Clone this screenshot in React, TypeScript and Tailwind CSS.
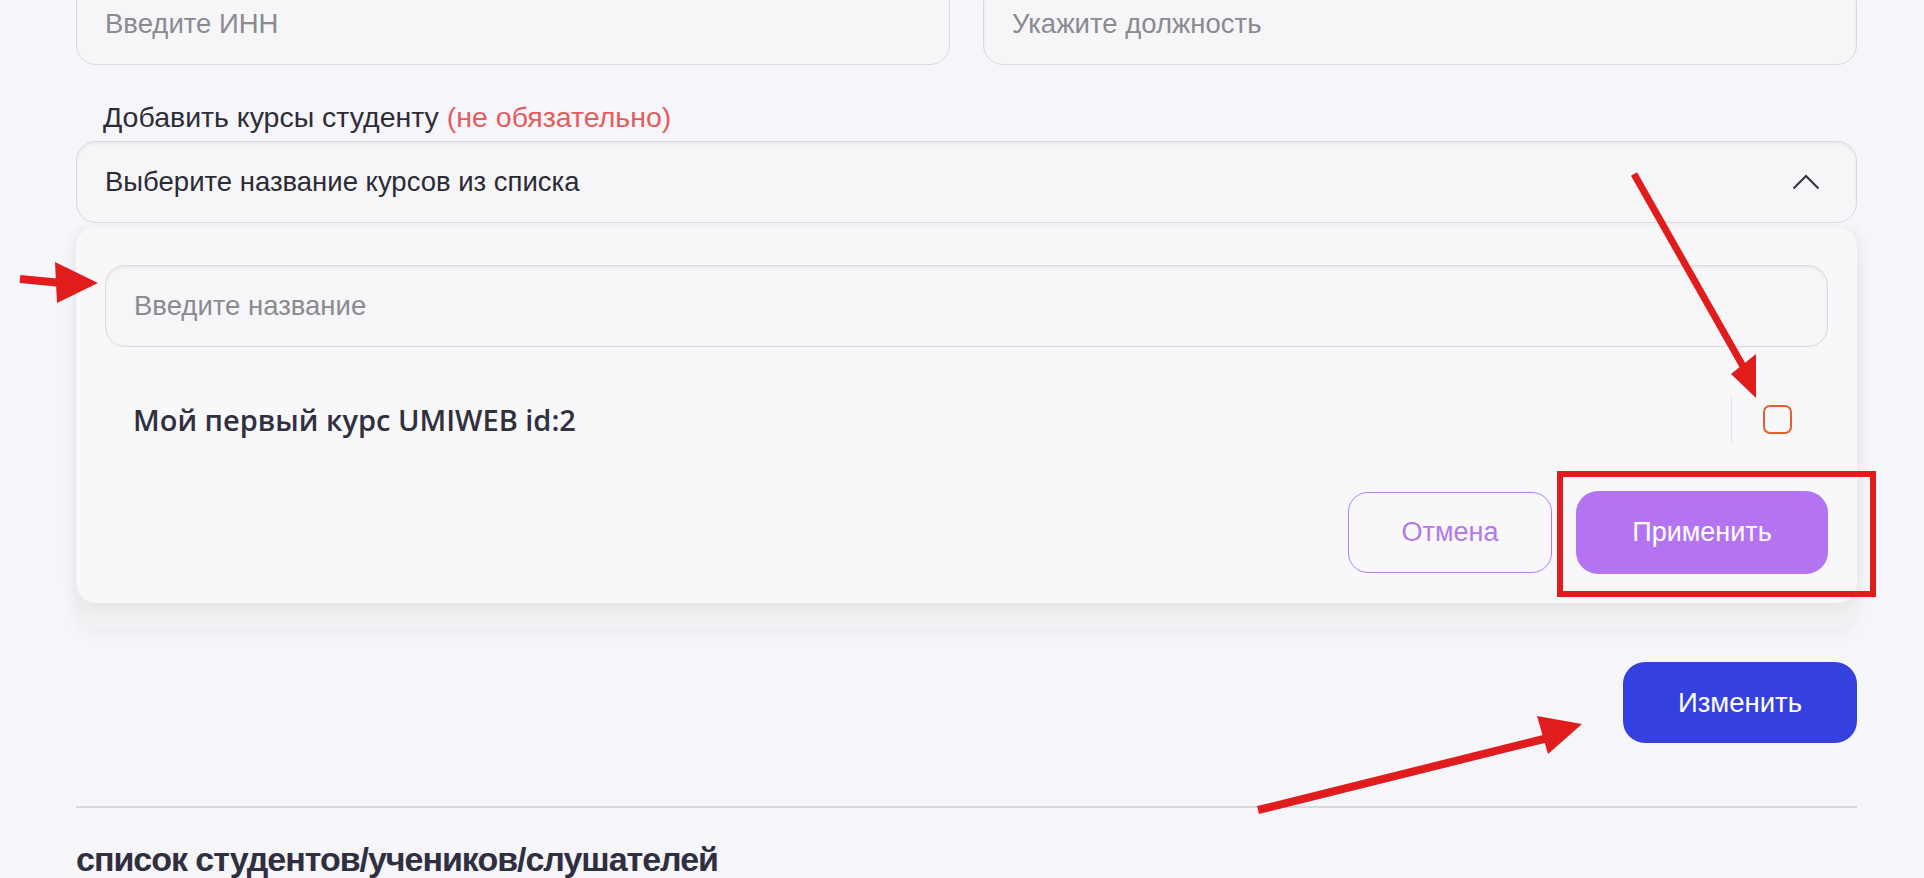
import React from 'react';

const sans = { fontFamily: '"Liberation Sans", Arial, sans-serif' };

const Annotations: React.FC = () => (
  <svg
    className="pointer-events-none absolute left-0 top-0"
    width={1924}
    height={878}
    viewBox="0 0 1924 878"
  >
    {/* left arrow to search field */}
    <line x1={20} y1={279} x2={62} y2={283} stroke="#e01c1c" strokeWidth={8} />
    <polygon points="55,262 98,283 57,303" fill="#e01c1c" />
    {/* diagonal arrow to checkbox */}
    <line x1={1634} y1={174} x2={1744} y2={368} stroke="#e01c1c" strokeWidth={7} />
    <polygon points="1731,374 1756,354 1756,398" fill="#e01c1c" />
    {/* arrow to save button */}
    <line x1={1258} y1={810} x2={1548} y2={738} stroke="#e01c1c" strokeWidth={8} />
    <polygon points="1537,716 1582,724 1548,754" fill="#e01c1c" />
    {/* frame round apply button */}
    <rect x={1560} y={474} width={313} height={120} fill="none" stroke="#e01c1c" strokeWidth={6} />
  </svg>
);

const Field: React.FC<{ placeholder: string }> = ({ placeholder }) => (
  <div className="h-[82px] rounded-[20px] border-[1.5px] border-[#d9d9de] bg-[#f6f6f8] px-[28px] flex items-center shadow-[inset_0_2px_3px_rgba(0,0,0,0.05)]">
    <span className="text-[27.5px] text-[#8a8a90]" style={sans}>{placeholder}</span>
  </div>
);

export default function App() {
  return (
    <div className="relative h-[878px] w-[1924px] overflow-hidden bg-[#f5f5fa]">
      <div className="mt-[-17px] pl-[76px] pr-[67px]">
        <div className="grid grid-cols-2 gap-[33px]">
          <Field placeholder="Введите ИНН" />
          <Field placeholder="Укажите должность" />
        </div>

        <div className="mt-[37px] pl-[27px] text-[28.5px] leading-[30px] text-[#2d2d38]" style={sans}>
          Добавить курсы студенту <span className="text-[#e55c5c]">(не обязательно)</span>
        </div>

        <div className="mt-[9px] h-[82px] rounded-[20px] border-[1.5px] border-[#d9d9de] bg-[#f6f6f8] pl-[28px] pr-[36px] flex items-center justify-between shadow-[inset_0_2px_3px_rgba(0,0,0,0.05)]">
          <span className="text-[27.5px] text-[#2b2b35]" style={sans}>
            Выберите название курсов из списка
          </span>
          <svg width={28} height={16} viewBox="0 0 28 16" fill="none">
            <path d="M1.5 14.5L14 2L26.5 14.5" stroke="#33333d" strokeWidth={2} />
          </svg>
        </div>

        {/* dropdown panel */}
        <div className="mt-[4px] rounded-b-[20px] bg-[#f2f2f5] pb-[25px] shadow-[0_6px_16px_rgba(0,0,0,0.04)]">
          <div className="rounded-[20px] bg-[#f8f8fa] px-[29px] pt-[38px] pb-[29px] shadow-[0_6px_18px_rgba(0,0,0,0.06)]">
            <Field placeholder="Введите название" />

            <div className="mt-[49px] flex h-[47px] items-center justify-between pl-[28px] pr-[36px]">
              <span
                className="text-[29px] font-semibold text-[#30303e]"
                style={{ fontFamily: '"Open Sans", "Noto Sans", sans-serif' }}
              >
                Мой первый курс UMIWEB id:2
              </span>
              <div className="flex h-full items-center gap-[31px]">
                <div className="h-full w-[1.5px] bg-[#e2e2e6]" />
                <div className="h-[29px] w-[29px] rounded-[7px] border-[2.5px] border-[#e0602f]" />
              </div>
            </div>

            <div className="mt-[48px] flex items-center justify-end gap-[24px]" style={sans}>
              <button className="h-[81px] w-[204px] rounded-[20px] border-[1.5px] border-[#b47ee9] text-[27px] text-[#b07be8]">
                Отмена
              </button>
              <button className="h-[83px] w-[252px] rounded-[22px] bg-[#b474f1] text-[27px] text-white">
                Применить
              </button>
            </div>
          </div>
        </div>

        <div className="mt-[34px] flex justify-end">
          <button
            className="h-[81px] w-[234px] rounded-[22px] bg-[#3541de] text-[27.5px] text-white"
            style={sans}
          >
            Изменить
          </button>
        </div>

        <div className="mt-[63px] h-[2px] bg-[#d8d8de]" />

        <h2
          className="mt-[34px] text-[34px] font-bold leading-none tracking-[-0.03em] text-[#2f2f40]"
          style={sans}
        >
          список студентов/учеников/слушателей
        </h2>
      </div>

      <Annotations />
    </div>
  );
}
